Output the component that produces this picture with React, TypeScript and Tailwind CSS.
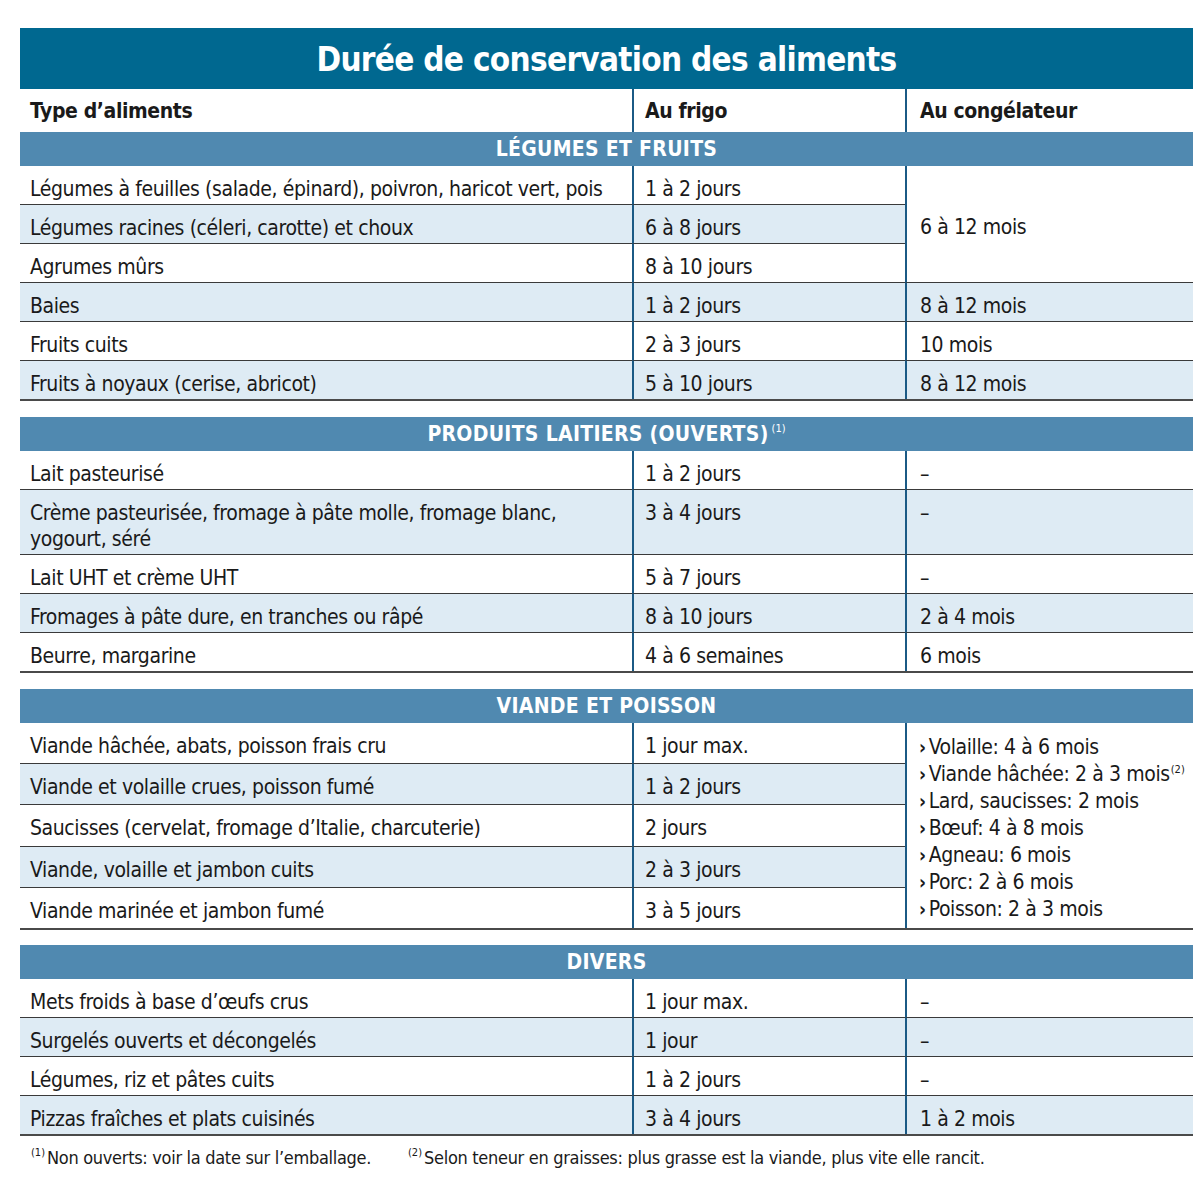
import React from "react";

type Cell3 = string | null | { text: React.ReactNode; span: number };
type Row = { a: React.ReactNode; b: string; c: Cell3 };

const Sup = ({ children }: { children: React.ReactNode }) => (
  <sup className="text-[11px] relative -top-[8px] ml-[1px] mr-[2px] tracking-normal">{children}</sup>
);

const legumes: Row[] = [
  { a: "Légumes à feuilles (salade, épinard), poivron, haricot vert, pois", b: "1 à 2 jours", c: { text: "6 à 12 mois", span: 3 } },
  { a: "Légumes racines (céleri, carotte) et choux", b: "6 à 8 jours", c: null },
  { a: "Agrumes mûrs", b: "8 à 10 jours", c: null },
  { a: "Baies", b: "1 à 2 jours", c: "8 à 12 mois" },
  { a: "Fruits cuits", b: "2 à 3 jours", c: "10 mois" },
  { a: "Fruits à noyaux (cerise, abricot)", b: "5 à 10 jours", c: "8 à 12 mois" },
];

const laitiers: Row[] = [
  { a: "Lait pasteurisé", b: "1 à 2 jours", c: "–" },
  { a: <>Crème pasteurisée, fromage à pâte molle, fromage blanc,<br />yogourt, séré</>, b: "3 à 4 jours", c: "–" },
  { a: "Lait UHT et crème UHT", b: "5 à 7 jours", c: "–" },
  { a: "Fromages à pâte dure, en tranches ou râpé", b: "8 à 10 jours", c: "2 à 4 mois" },
  { a: "Beurre, margarine", b: "4 à 6 semaines", c: "6 mois" },
];

const viandeList: React.ReactNode[] = [
  "Volaille: 4 à 6 mois",
  <>Viande hâchée: 2 à 3 mois<Sup>(2)</Sup></>,
  "Lard, saucisses: 2 mois",
  "Bœuf: 4 à 8 mois",
  "Agneau: 6 mois",
  "Porc: 2 à 6 mois",
  "Poisson: 2 à 3 mois",
];

const viande: Row[] = [
  {
    a: "Viande hâchée, abats, poisson frais cru",
    b: "1 jour max.",
    c: {
      text: (
        <div className="flex flex-col leading-[27px] whitespace-nowrap">
          {viandeList.map((t, i) => (
            <div key={i} className="flex items-baseline">
              <span className="text-[19px] font-bold mr-[3px]">›</span>
              <span>{t}</span>
            </div>
          ))}
        </div>
      ),
      span: 5,
    },
  },
  { a: "Viande et volaille crues, poisson fumé", b: "1 à 2 jours", c: null },
  { a: "Saucisses (cervelat, fromage d’Italie, charcuterie)", b: "2 jours", c: null },
  { a: "Viande, volaille et jambon cuits", b: "2 à 3 jours", c: null },
  { a: "Viande marinée et jambon fumé", b: "3 à 5 jours", c: null },
];

const divers: Row[] = [
  { a: "Mets froids à base d’œufs crus", b: "1 jour max.", c: "–" },
  { a: "Surgelés ouverts et décongelés", b: "1 jour", c: "–" },
  { a: "Légumes, riz et pâtes cuits", b: "1 à 2 jours", c: "–" },
  { a: "Pizzas fraîches et plats cuisinés", b: "3 à 4 jours", c: "1 à 2 mois" },
];

function Band({ children }: { children: React.ReactNode }) {
  return (
    <div className="h-[34px] bg-[#5089b0] flex items-center justify-center text-white font-bold text-[21px] tracking-[0.3px] leading-none">
      {children}
    </div>
  );
}

function Section({ rows, merged }: { rows: Row[]; merged?: "list" | "center" }) {
  return (
    <div className="grid grid-cols-[612px_273px_288px] border-b-2 border-[#4a4a4a]">
      {rows.map((r, i) => {
        const light = i % 2 === 1;
        const bg = light ? "bg-[#deebf4]" : "bg-white";
        const top = i > 0 ? "border-t border-[#3a3a3a]" : "";
        const cells: React.ReactNode[] = [
          <div key={`a${i}`} className={`col-start-1 ${bg} ${top} pl-[10px] pr-2 pt-[10px] pb-[2px] leading-[26px]`}>
            {r.a}
          </div>,
          <div key={`b${i}`} className={`col-start-2 ${bg} ${top} border-l-2 border-l-[#1b5a85] pl-[11px] pt-[10px] pb-[2px] leading-[26px]`}>
            {r.b}
          </div>,
        ];
        if (r.c !== null) {
          if (typeof r.c === "string") {
            cells.push(
              <div key={`c${i}`} className={`col-start-3 ${bg} ${top} border-l-2 border-l-[#1b5a85] pl-[13px] pt-[10px] pb-[2px] leading-[26px]`}>
                {r.c}
              </div>
            );
          } else {
            const span = r.c.span;
            const spanCls = span === 3 ? "row-span-3" : span === 5 ? "row-span-5" : "";
            cells.push(
              <div
                key={`c${i}`}
                className={`col-start-3 ${spanCls} bg-white ${top} border-l-2 border-l-[#1b5a85] flex items-center ${merged === "list" ? "pt-[11px] pb-[5px] pl-[12px]" : "pl-[13px] pt-[7px]"}`}
              >
                {r.c.text}
              </div>
            );
          }
        }
        return cells;
      })}
    </div>
  );
}

export default function App() {
  return (
    <div className="w-[1200px] h-[1178px] bg-white font-['DejaVu_Sans_Condensed','DejaVu_Sans',sans-serif] text-[#1a1a1a] text-[21px] tracking-[-0.4px]">
      <div className="pt-[28px] pl-[20px] w-[1193px]">
        <div className="h-[61px] bg-[#006890] flex items-center justify-center text-white font-bold text-[33px] tracking-[-0.7px] leading-none pt-[2px]">
          Durée de conservation des aliments
        </div>
        <div className="grid grid-cols-[612px_273px_288px] h-[43px] font-bold text-[21px]">
          <div className="pl-[10px] pt-[3px] flex items-center">Type d’aliments</div>
          <div className="border-l-2 border-[#1b5a85] pl-[11px] pt-[3px] flex items-center">Au frigo</div>
          <div className="border-l-2 border-[#1b5a85] pl-[13px] pt-[3px] flex items-center">Au congélateur</div>
        </div>
        <Band>LÉGUMES ET FRUITS</Band>
        <Section rows={legumes} merged="center" />
        <div className="h-[16px]" />
        <Band>
          PRODUITS LAITIERS (OUVERTS)
          <span className="text-[11px] font-normal tracking-normal self-start mt-[6px] ml-[3px]">(1)</span>
        </Band>
        <Section rows={laitiers} />
        <div className="h-[16px]" />
        <Band>VIANDE ET POISSON</Band>
        <Section rows={viande} merged="list" />
        <div className="h-[15px]" />
        <Band>DIVERS</Band>
        <Section rows={divers} />
        <div className="flex pl-[10px] pt-[10px] text-[18px] tracking-[-0.3px] leading-[24px]">
          <div className="w-[377px]">
            <Sup>(1)</Sup>Non ouverts: voir la date sur l’emballage.
          </div>
          <div>
            <Sup>(2)</Sup>Selon teneur en graisses: plus grasse est la viande, plus vite elle rancit.
          </div>
        </div>
      </div>
    </div>
  );
}
